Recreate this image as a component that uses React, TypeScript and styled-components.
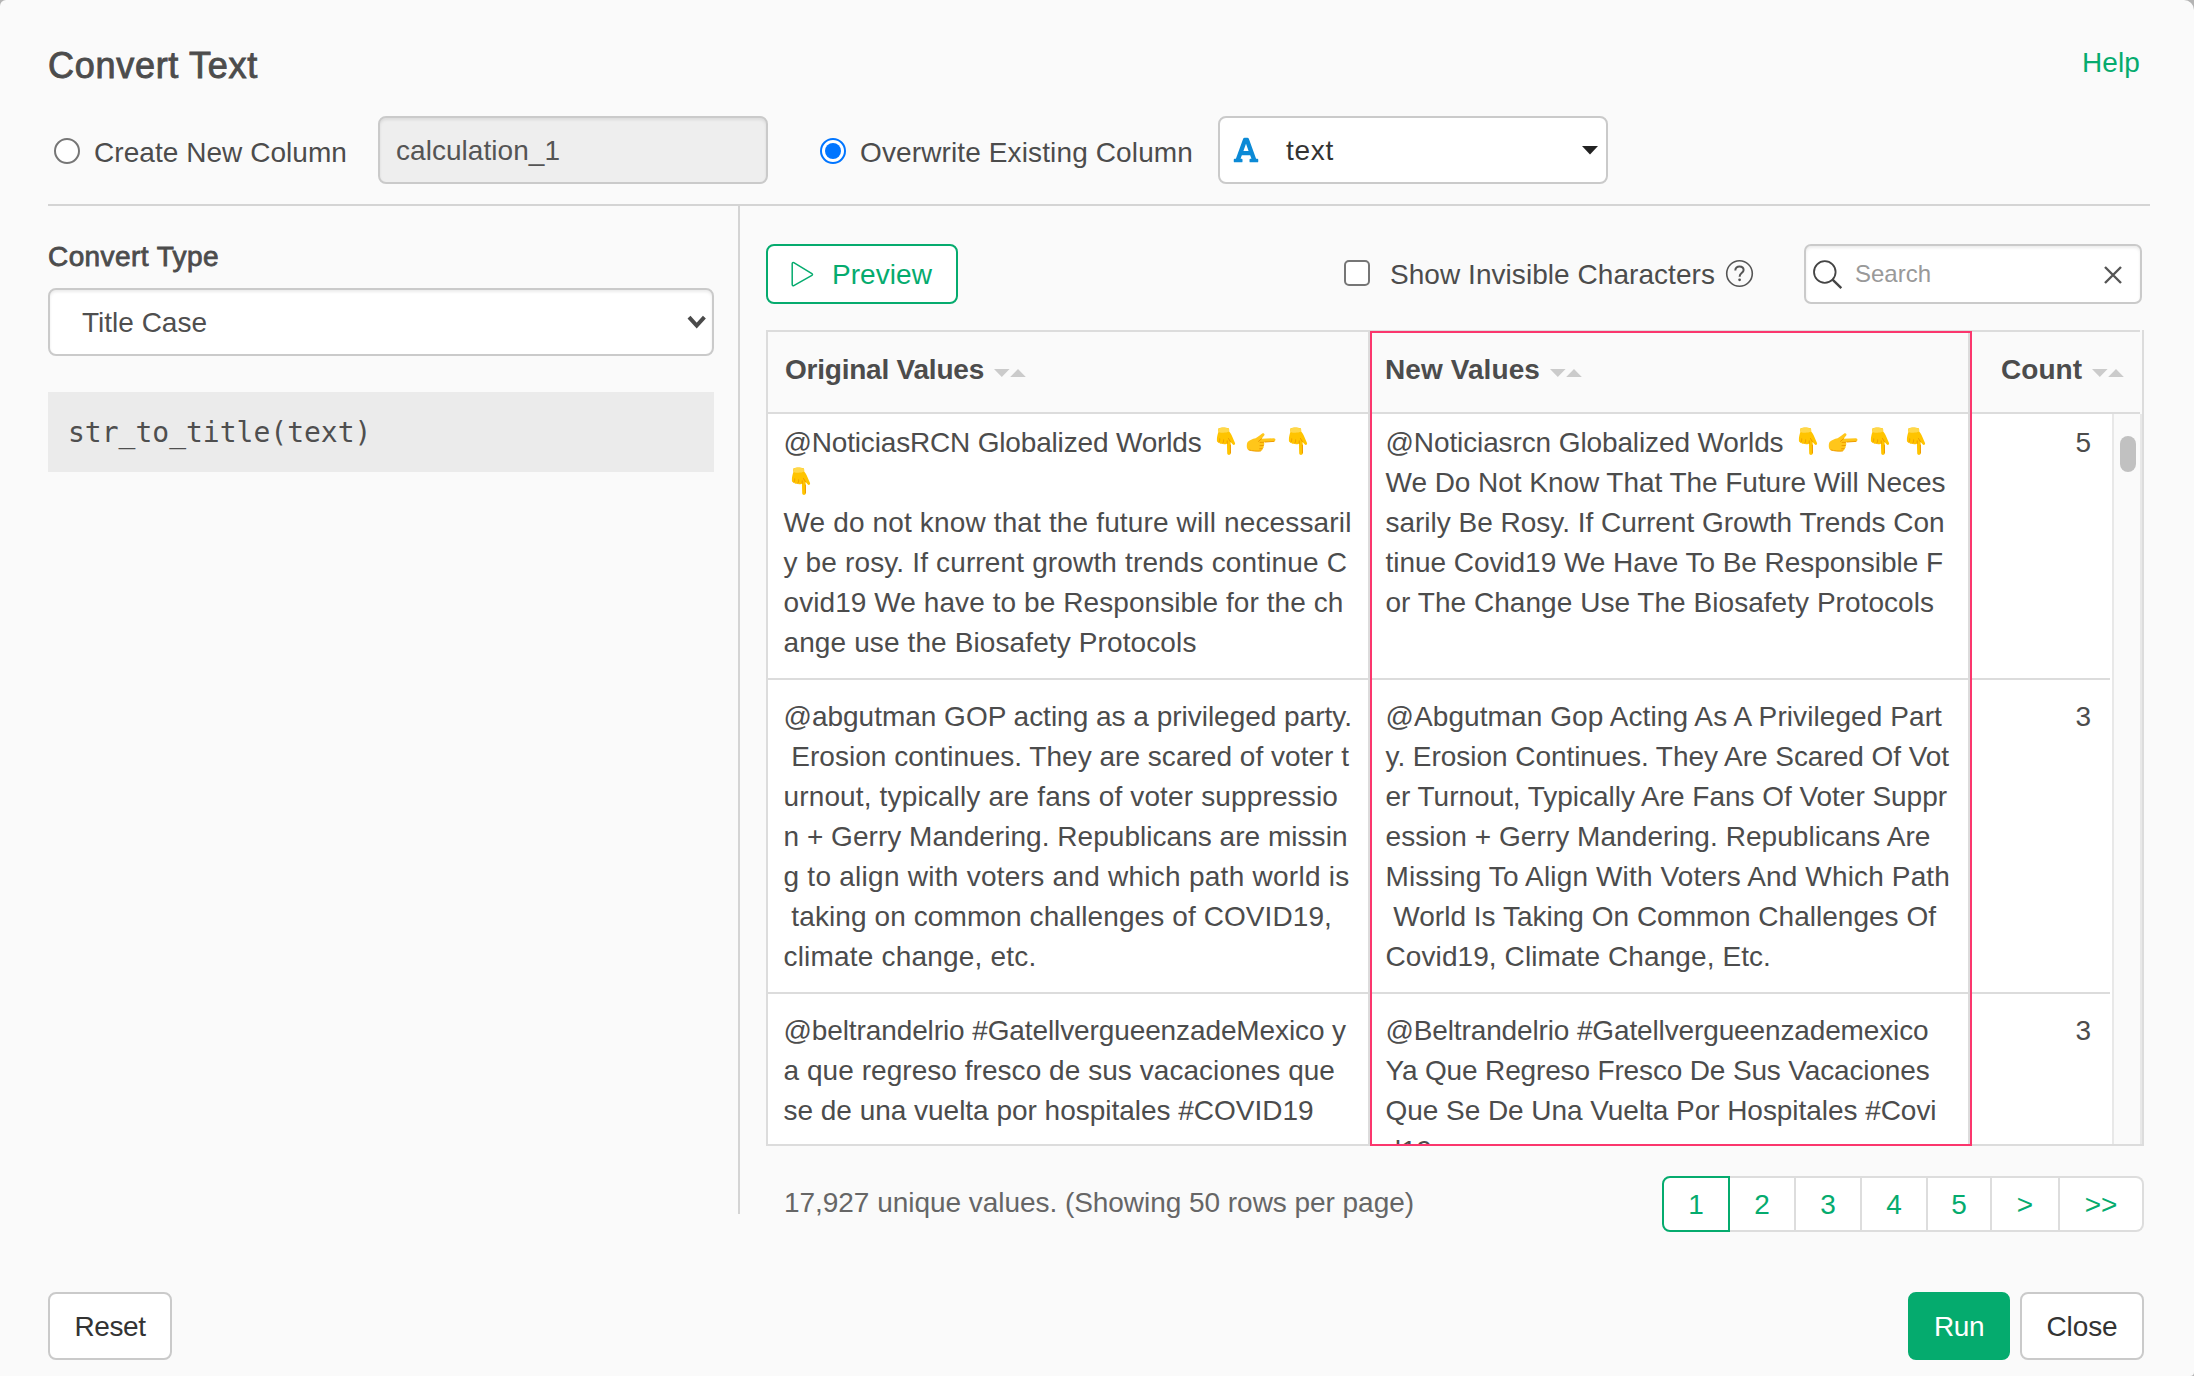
import React, { useLayoutEffect, useRef, useState } from "react";
import styled, { createGlobalStyle } from "styled-components";
import { FaFont } from "react-icons/fa";

const green = "#05ab6e";
const line = "#dcdcdc";
const ink = "#4c4c4c";

const GlobalStyle = createGlobalStyle`
  * { box-sizing: border-box; }
  html, body { margin: 0; background: #b4b4b4; }
  body {
    font-family: "Liberation Sans", Arial, sans-serif;
    font-size: 28px;
    line-height: 40px;
    color: ${ink};
  }
  button, input { font: inherit; color: inherit; margin: 0; }
`;

/* ---------- text set to a given measure ---------- */

const Measure = styled.span`
  display: inline-block;
  white-space: pre;
  vertical-align: top;
`;

function Fit({ w, children }: { w: number; children: string }) {
  const ref = useRef<HTMLSpanElement>(null);
  const [spacing, setSpacing] = useState(0);
  useLayoutEffect(() => {
    if (ref.current) {
      const natural = ref.current.getBoundingClientRect().width;
      setSpacing((w - natural) / children.length);
    }
  }, [w, children]);
  return (
    <Measure ref={ref} style={{ letterSpacing: `${spacing}px` }}>
      {children}
    </Measure>
  );
}

/* ---------- dialog frame ---------- */

const Dialog = styled.div`
  width: 2194px;
  height: 1376px;
  padding: 0 50px 0 48px;
  background: #fafafa;
  border-radius: 6px 10px 4px 0;
  display: flex;
  flex-direction: column;
  overflow: hidden;
`;

const Header = styled.header`
  height: 116px;
  flex: none;
  display: flex;
  justify-content: space-between;
  align-items: flex-start;
  padding: 43px 4px 0 0;
`;

const Title = styled.h1`
  margin: 1px 0 0;
  font-size: 36px;
  line-height: 44px;
  font-weight: 400;
  -webkit-text-stroke: 0.9px ${ink};
`;

const HelpLink = styled.a`
  color: ${green};
`;

const Options = styled.div`
  height: 68px;
  flex: none;
  display: flex;
  align-items: center;
`;

const RadioLabel = styled.label<{ $left: number; $width: number }>`
  display: flex;
  align-items: center;
  margin-left: ${(p) => p.$left}px;
  width: ${(p) => p.$width}px;
  gap: 14px;
  padding-top: 6px;
`;

const Radio = styled.span<{ $on?: boolean }>`
  width: 26px;
  height: 26px;
  margin-top: -4px;
  flex: none;
  border-radius: 50%;
  border: 2px solid ${(p) => (p.$on ? "#0075ff" : "#767676")};
  background: #fff;
  display: grid;
  place-items: center;
  &::after {
    content: "";
    width: 16px;
    height: 16px;
    border-radius: 50%;
    background: ${(p) => (p.$on ? "#0075ff" : "transparent")};
  }
`;

const Field = styled.div<{ $w: number; $disabled?: boolean; $flat?: boolean }>`
  width: ${(p) => p.$w}px;
  height: 68px;
  flex: none;
  display: flex;
  align-items: center;
  border: 2px solid #cacaca;
  border-radius: 8px;
  background: ${(p) => (p.$disabled ? "#eeeeee" : "#fff")};
  box-shadow: ${(p) => (p.$flat ? "none" : "inset 0 2px 3px rgba(0, 0, 0, 0.08)")};
  color: #555;
`;

const NameField = styled(Field)`
  padding: 1px 0 0 16px;
`;

const ColumnField = styled(Field)`
  padding: 0 8px 0 12px;
  color: #333;
  svg.type {
    width: 28px;
    height: 28px;
    margin-top: -1px;
    color: #0c8ad6;
  }
  span {
    margin: 2px auto 0 26px;
  }
`;

const TypeField = styled(Field)`
  padding: 0 5px 0 32px;
  justify-content: space-between;
  color: #4f4f4f;
  span {
    margin-top: 2px;
  }
`;

const Rule = styled.hr`
  width: 2102px;
  height: 2px;
  flex: none;
  margin: 20px -6px 0 0;
  border: 0;
  background: #d4d4d4;
`;

const Main = styled.main`
  display: flex;
  height: 1086px;
  flex: none;
`;

/* ---------- left panel ---------- */

const Settings = styled.section`
  width: 692px;
  height: 1008px;
  flex: none;
  border-right: 2px solid #d4d4d4;
  padding: 31px 24px 0 0;
`;

const SettingsLabel = styled.div`
  height: 51px;
  -webkit-text-stroke: 0.8px ${ink};
`;

const Code = styled.pre`
  margin: 36px 0 0;
  width: 666px;
  height: 80px;
  padding: 1px 0 0 20px;
  background: #ebebeb;
  font: 28px/80px "DejaVu Sans Mono", monospace;
  color: #4f4f4f;
`;

/* ---------- preview panel ---------- */

const Preview = styled.section`
  width: 1404px;
  padding: 38px 0 0 26px;
`;

const Toolbar = styled.div`
  height: 60px;
  display: flex;
  align-items: center;
`;

const PreviewButton = styled.button`
  width: 192px;
  height: 60px;
  margin-right: auto;
  display: flex;
  align-items: center;
  padding: 0 0 0 23px;
  gap: 17px;
  border: 2px solid ${green};
  border-radius: 8px;
  background: #fff;
  color: ${green};
  span {
    margin-top: 2px;
  }
`;

const Checkbox = styled.span`
  width: 26px;
  height: 26px;
  margin: -2px 20px 0 0;
  border: 2px solid #767676;
  border-radius: 5px;
  background: #fff;
`;

const CheckLabel = styled.label`
  display: flex;
  align-items: center;
  margin-right: 50px;
  svg {
    margin: -1px 0 0 10px;
  }
`;

const CheckText = styled.span`
  margin-top: 2px;
`;

const SearchBox = styled.div`
  width: 338px;
  height: 60px;
  margin-right: 2px;
  display: flex;
  align-items: center;
  padding: 1px 18px 0 7px;
  border: 2px solid #cacaca;
  border-radius: 7px;
  background: #fff;
  box-shadow: inset 0 2px 3px rgba(0, 0, 0, 0.08);
  font-size: 24px;
  color: #999;
  span {
    margin: -1px auto 0 12px;
  }
`;

const Table = styled.div`
  position: relative;
  width: 1378px;
  height: 816px;
  margin-top: 26px;
  border: solid ${line};
  border-width: 0 2px 2px 2px;
`;

const TableHead = styled.div`
  height: 84px;
  width: 1372px;
  display: grid;
  grid-template-columns: 602px 600px 170px;
  border: solid ${line};
  border-width: 2px 0;
  font-weight: 700;
`;

const HeadCell = styled.div<{ $pad: number; $last?: boolean }>`
  display: flex;
  align-items: center;
  gap: 10px;
  padding: 0 0 4px ${(p) => p.$pad}px;
  border-right: ${(p) => (p.$last ? "0" : `2px solid ${line}`)};
  svg {
    margin-top: 5px;
  }
`;

const TableBody = styled.div`
  height: 730px;
  display: flex;
  gap: 2px;
  overflow: hidden;
  background: #fff;
`;

const Rows = styled.div`
  width: 1342px;
  margin-top: -8px;
`;

const Row = styled.div`
  display: grid;
  grid-template-columns: 602px 600px 140px;
  border-bottom: 2px solid ${line};
`;

const Cell = styled.div`
  padding: 17px 0 15px 15.5px;
  border-right: 2px solid ${line};
`;

const CountCell = styled.div`
  padding: 17px 19px 15px 0;
  text-align: right;
`;

const TextLine = styled.div`
  height: 40px;
  white-space: pre;
`;

const EmojiRun = styled.span<{ $gap?: number }>`
  display: inline-flex;
  height: 40px;
  vertical-align: top;
  margin-left: ${(p) => p.$gap ?? 0}px;
`;

const ScrollTrack = styled.div`
  width: 30px;
  height: 730px;
  padding: 22px 0 0 6px;
  border: solid #e8e8e8;
  border-width: 0 2px;
  background: #fafafa;
`;

const ScrollThumb = styled.div`
  width: 16px;
  height: 36px;
  border-radius: 8px;
  background: #c1c1c1;
`;

const Highlight = styled.div`
  position: absolute;
  left: 602px;
  top: 1px;
  width: 602px;
  height: 815px;
  border: 2px solid #fb366d;
  pointer-events: none;
`;

const Summary = styled.div`
  display: flex;
  align-items: center;
  justify-content: space-between;
  height: 56px;
  margin-top: 30px;
  padding-left: 18px;
  color: #666;
  > span {
    margin-top: -3px;
  }
`;

const Pager = styled.nav`
  display: flex;
  height: 56px;
`;

const Page = styled.button<{ $w: number; $on?: boolean; $end?: boolean }>`
  width: ${(p) => p.$w}px;
  padding: 2px 0 0;
  background: #fff;
  color: ${green};
  border: 2px solid ${(p) => (p.$on ? green : "#dddddd")};
  border-left-width: ${(p) => (p.$on ? 2 : 0)}px;
  border-radius: ${(p) => (p.$on ? "8px 0 0 8px" : p.$end ? "0 8px 8px 0" : "0")};
`;

const Footer = styled.footer`
  display: flex;
  height: 68px;
  flex: none;
`;

const Button = styled.button<{ $w: number; $primary?: boolean }>`
  width: ${(p) => p.$w}px;
  height: 68px;
  padding: 1px 0 0;
  margin: ${(p) => (p.$primary ? "0 10px 0 auto" : "0")};
  border-radius: 8px;
  border: 2px solid ${(p) => (p.$primary ? green : "#cacaca")};
  background: ${(p) => (p.$primary ? green : "#fff")};
  color: ${(p) => (p.$primary ? "#fff" : "#333")};
`;

/* ---------- drawings ---------- */

const Caret = () => (
  <svg width="16" height="9" viewBox="0 0 16 9">
    <path d="M0 0h16L8 8.5z" fill="#222" />
  </svg>
);

const Chevron = () => (
  <svg width="20" height="14" viewBox="0 0 20 14">
    <path d="M2 2.2l7.7 8.3 7.7-8.3" fill="none" stroke="#4a4a4a" strokeWidth="4" />
  </svg>
);

const PlayIcon = () => (
  <svg width="24" height="28" viewBox="0 0 24 28">
    <path
      d="M1.2 3.6v21c0 1 .8 1.4 1.6 1L20.9 15.4c.8-.5.8-1.3 0-1.8L2.8 2.6c-.8-.5-1.6 0-1.6 1z"
      fill="none"
      stroke={green}
      strokeWidth="1.5"
    />
  </svg>
);

const QuestionIcon = () => (
  <svg width="29" height="29" viewBox="0 0 29 29" fill="none" stroke="#555">
    <circle cx="14.5" cy="14.5" r="12.8" strokeWidth="1.6" />
    <path
      d="M10.300 11.400c0-2.500 1.800-3.900 4.200-3.900 2.300 0 4.100 1.300 4.100 3.500 0 3-3.900 3.200-3.900 6.200v.6"
      strokeWidth="2"
    />
    <circle cx="14.6" cy="20.8" r="1.4" fill="#555" stroke="none" />
  </svg>
);

const SearchIcon = () => (
  <svg width="30" height="30" viewBox="0 0 30 30" fill="none" stroke="#444" strokeWidth="1.8">
    <circle cx="11.8" cy="12" r="10.8" />
    <path d="M19.3 19.3l9 8.8" strokeWidth="2.4" />
  </svg>
);

const ClearIcon = () => (
  <svg width="18" height="18" viewBox="0 0 18 18">
    <path d="M1 1l16 16M17 1L1 17" stroke="#555" strokeWidth="2.4" />
  </svg>
);

const SortMarks = () => (
  <svg width="32" height="8" viewBox="0 0 32 8">
    <path d="M0 0h15.6L7.8 8zM16.2 8h15.6L24 0z" fill="#cbcbcb" />
  </svg>
);

const HandDown = () => (
  <svg width="36" height="40" viewBox="0 0 36 40">
    <path
      d="M9.8 5.2c2-.9 7-.9 9.600 0 .8.300.9 1.300.8 3.400 1.300 1.600 2.500 3.500 3.200 5.500l2.600 6c.5 1.600-1.200 2.400-2.400 1.200l-2-2.400.1 11.400c0 2.300-3.400 2.300-3.500 0l-.3-9.800c-2 1.400-3.400.9-4-.1-2 .7-3.400.1-3.800-1-1.600.1-2.300-.8-2.200-2.200-.1-2.600.6-5.800 1.600-8.400-.5-1.500-.4-3 .3-3.600z"
      fill="#ffc400"
    />
    <path d="M9.8 5.3c2-.9 7-.9 9.600 0 .7.300.8 2 .6 3.300-3 1.500-7.500 1.500-10.500.3-.4-1.500-.4-3 .3-3.600z" fill="#ffd84a" />
    <path
      d="M9.9 19.300c.8-1 .9-2.200.8-3.400M13.700 20.300c.9-1 1-2.200.9-3.400M21.400 18.700l-1.900-3.200M18.200 20.500v-2.600M21.400 22l.1 8"
      fill="none"
      stroke="#ee9b00"
      strokeWidth="1"
      strokeLinecap="round"
    />
  </svg>
);

const HandRight = () => (
  <svg width="36" height="40" viewBox="0 0 36 40">
    <path
      d="M2.6 19c1.800-1.800 5-3.300 8-3.800 2.300-1.300 4.500-3.100 6.600-4.600 1.500-1 3 .5 2 2l-2.600 3.100 12.200-.4c2.200.1 2.200 3 0 3.200l-10.300.7c1.300 1.300 1 2.600-.1 3.200.7 1.500.1 2.700-1 3.200.2 1.500-.6 2.300-2 2.400-3.500.4-7.500.1-11-.8-1.300-.2-2.200-.9-2.400-2.200-.4-2-.3-4.400.6-6z"
      fill="#ffc61a"
    />
    <path
      d="M18.600 19.300l-3.500.1M18.400 22.500l-3.400.1M17.300 25.700l-2.700.1M16.500 15.800l-3 2.600M20 19l9-.6M4 27c3.500 1.100 8 1.300 11.500 1"
      fill="none"
      stroke="#ee9b00"
      strokeWidth="1"
      strokeLinecap="round"
    />
  </svg>
);

/* ---------- data ---------- */

type LineData = { t?: string; w?: number; hands?: string };
type RowData = { before: LineData[]; after: LineData[]; count: number };

const rows: RowData[] = [
  {
    before: [
      { t: "@NoticiasRCN Globalized Worlds", w: 418, hands: "drd" },
      { hands: "d" },
      { t: "We do not know that the future will necessaril", w: 568 },
      { t: "y be rosy. If current growth trends continue C", w: 563.5 },
      { t: "ovid19 We have to be Responsible for the ch", w: 560 },
      { t: "ange use the Biosafety Protocols", w: 413 },
    ],
    after: [
      { t: "@Noticiasrcn Globalized Worlds", w: 398, hands: "drdd" },
      { t: "We Do Not Know That The Future Will Neces", w: 560 },
      { t: "sarily Be Rosy. If Current Growth Trends Con", w: 559 },
      { t: "tinue Covid19 We Have To Be Responsible F", w: 557.5 },
      { t: "or The Change Use The Biosafety Protocols", w: 548.5 },
      {},
    ],
    count: 5,
  },
  {
    before: [
      { t: "@abgutman GOP acting as a privileged party.", w: 568.5 },
      { t: " Erosion continues. They are scared of voter t", w: 565.5 },
      { t: "urnout, typically are fans of voter suppressio", w: 554.5 },
      { t: "n + Gerry Mandering. Republicans are missin", w: 564 },
      { t: "g to align with voters and which path world is", w: 566 },
      { t: " taking on common challenges of COVID19,", w: 548.5 },
      { t: "climate change, etc.", w: 253 },
    ],
    after: [
      { t: "@Abgutman Gop Acting As A Privileged Part", w: 556.5 },
      { t: "y. Erosion Continues. They Are Scared Of Vot", w: 563.5 },
      { t: "er Turnout, Typically Are Fans Of Voter Suppr", w: 561.5 },
      { t: "ession + Gerry Mandering. Republicans Are", w: 545 },
      { t: "Missing To Align With Voters And Which Path", w: 564.5 },
      { t: " World Is Taking On Common Challenges Of", w: 550.5 },
      { t: "Covid19, Climate Change, Etc.", w: 385.5 },
    ],
    count: 3,
  },
  {
    before: [
      { t: "@beltrandelrio #GatellvergueenzadeMexico y", w: 562.5 },
      { t: "a que regreso fresco de sus vacaciones que", w: 551.5 },
      { t: "se de una vuelta por hospitales #COVID19", w: 530 },
    ],
    after: [
      { t: "@Beltrandelrio #Gatellvergueenzademexico", w: 543 },
      { t: "Ya Que Regreso Fresco De Sus Vacaciones", w: 544 },
      { t: "Que Se De Una Vuelta Por Hospitales #Covi", w: 551 },
      { t: "d19", w: 46.5 },
    ],
    count: 3,
  },
];

const pages = [
  { t: "1", w: 68 },
  { t: "2", w: 66 },
  { t: "3", w: 66 },
  { t: "4", w: 66 },
  { t: "5", w: 64 },
  { t: ">", w: 68 },
  { t: ">>", w: 84 },
];

const Lines = ({ lines }: { lines: LineData[] }) => (
  <>
    {lines.map((l, i) => (
      <TextLine key={i}>
        {l.t && <Fit w={l.w!}>{l.t}</Fit>}
        {l.hands && (
          <EmojiRun $gap={l.t ? 7.5 : 0}>
            {l.hands.split("").map((h, j) => (h === "d" ? <HandDown key={j} /> : <HandRight key={j} />))}
          </EmojiRun>
        )}
      </TextLine>
    ))}
  </>
);

export default function App() {
  return (
    <>
      <GlobalStyle />
      <Dialog>
        <Header>
          <Title>
            <Fit w={210}>Convert Text</Fit>
          </Title>
          <HelpLink>
            <Fit w={58}>Help</Fit>
          </HelpLink>
        </Header>
        <Options>
          <RadioLabel $left={6} $width={324}>
            <Radio />
            <Fit w={253}>Create New Column</Fit>
          </RadioLabel>
          <NameField $w={390} $disabled>
            <Fit w={164}>calculation_1</Fit>
          </NameField>
          <RadioLabel $left={52} $width={398}>
            <Radio $on />
            <Fit w={333}>Overwrite Existing Column</Fit>
          </RadioLabel>
          <ColumnField $w={390} $flat>
            <FaFont className="type" />
            <Fit w={48}>text</Fit>
            <Caret />
          </ColumnField>
        </Options>
        <Rule />
        <Main>
          <Settings>
            <SettingsLabel>
              <Fit w={171}>Convert Type</Fit>
            </SettingsLabel>
            <TypeField $w={666}>
              <Fit w={125}>Title Case</Fit>
              <Chevron />
            </TypeField>
            <Code>str_to_title(text)</Code>
          </Settings>
          <Preview>
            <Toolbar>
              <PreviewButton>
                <PlayIcon />
                <Fit w={100}>Preview</Fit>
              </PreviewButton>
              <CheckLabel>
                <Checkbox />
                <CheckText>
                  <Fit w={325}>Show Invisible Characters</Fit>
                </CheckText>
                <QuestionIcon />
              </CheckLabel>
              <SearchBox>
                <SearchIcon />
                <Fit w={76}>Search</Fit>
                <ClearIcon />
              </SearchBox>
            </Toolbar>
            <Table>
              <TableHead>
                <HeadCell $pad={17}>
                  <Fit w={199}>Original Values</Fit>
                  <SortMarks />
                </HeadCell>
                <HeadCell $pad={15}>
                  <Fit w={155}>New Values</Fit>
                  <SortMarks />
                </HeadCell>
                <HeadCell $pad={31} $last>
                  <Fit w={81}>Count</Fit>
                  <SortMarks />
                </HeadCell>
              </TableHead>
              <TableBody>
                <Rows>
                  {rows.map((r, i) => (
                    <Row key={i}>
                      <Cell>
                        <Lines lines={r.before} />
                      </Cell>
                      <Cell>
                        <Lines lines={r.after} />
                      </Cell>
                      <CountCell>{r.count}</CountCell>
                    </Row>
                  ))}
                </Rows>
                <ScrollTrack>
                  <ScrollThumb />
                </ScrollTrack>
              </TableBody>
              <Highlight />
            </Table>
            <Summary>
              <Fit w={630}>17,927 unique values. (Showing 50 rows per page)</Fit>
              <Pager>
                {pages.map((p, i) => (
                  <Page key={p.t} $w={p.w} $on={i === 0} $end={i === pages.length - 1}>
                    {p.t}
                  </Page>
                ))}
              </Pager>
            </Summary>
          </Preview>
        </Main>
        <Footer>
          <Button $w={124}>
            <Fit w={71}>Reset</Fit>
          </Button>
          <Button $w={102} $primary>
            <Fit w={50}>Run</Fit>
          </Button>
          <Button $w={124}>
            <Fit w={71}>Close</Fit>
          </Button>
        </Footer>
      </Dialog>
    </>
  );
}
